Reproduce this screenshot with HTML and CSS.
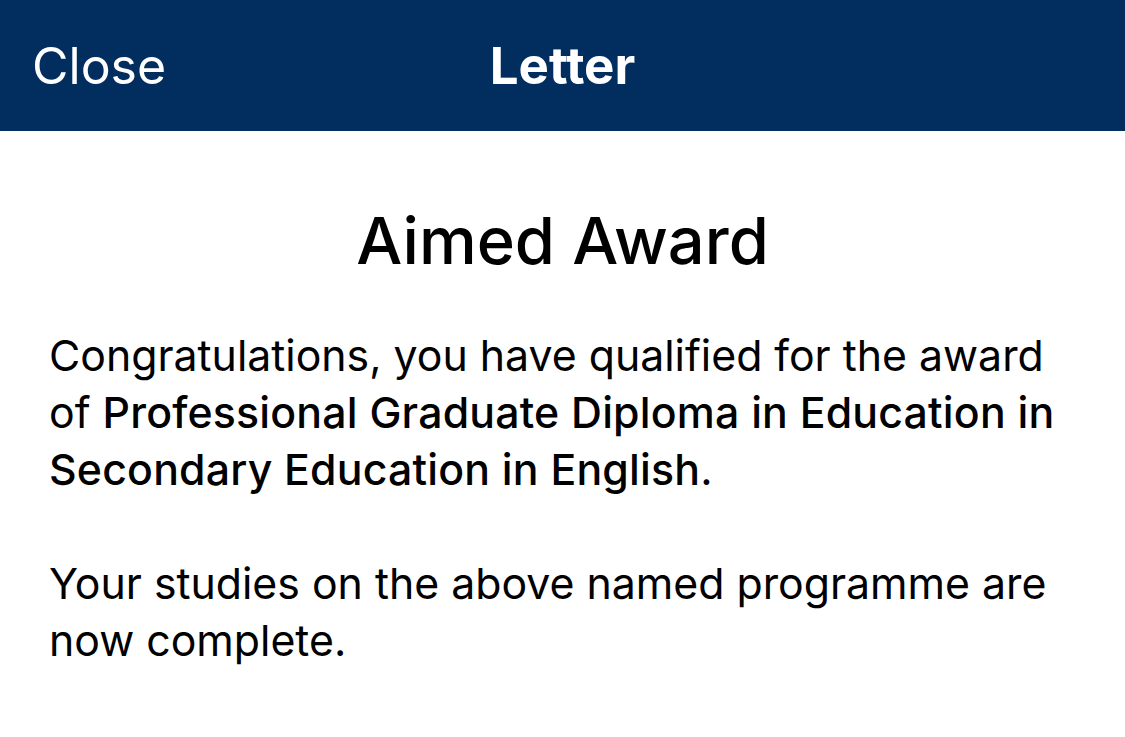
FILE: index.html
```html
<!DOCTYPE html>
<html lang="en">
<head>
<meta charset="utf-8">
<title>Letter</title>
<link rel="stylesheet" href="styles.css">
</head>
<body>
<header class="navbar">
  <span class="nav-close">Close</span>
  <h1 class="nav-title">Letter</h1>
  <span class="nav-spacer"></span>
</header>
<main class="letter">
  <h2 class="letter-title">Aimed Award</h2>
  <p class="letter-text">Congratulations, you have qualified for the award of <strong>Professional Graduate Diploma in Education in Secondary Education in English</strong>.</p>
  <p class="letter-text">Your studies on the above named programme are now complete.</p>
</main>
</body>
</html>
```
FILE: styles.css
```css
* { box-sizing: border-box; }
html, body {
  margin: 0;
  padding: 0;
  background: #ffffff;
  font-family: Inter, "Liberation Sans", sans-serif;
  color: #000000;
}
.navbar {
  height: 131px;
  background: #022d5f;
  color: #ffffff;
  display: grid;
  grid-template-columns: 1fr auto 1fr;
  align-items: center;
  padding: 0 32px;
}
.nav-close {
  font-size: 50px;
  font-weight: 400;
  justify-self: start;
}
.nav-title {
  margin: 0;
  font-size: 51px;
  font-weight: 700;
}
.letter {
  padding: 70px 49px 0 49px;
}
.letter-title {
  margin: 0 0 46px;
  text-align: center;
  font-size: 65px;
  line-height: 80px;
  font-weight: 500;
}
.letter-text {
  margin: 0 0 57px;
  font-size: 42.8px;
  line-height: 57px;
  font-weight: 400;
}
.letter-text strong {
  font-weight: 500;
  letter-spacing: 0.2px;
}
```
